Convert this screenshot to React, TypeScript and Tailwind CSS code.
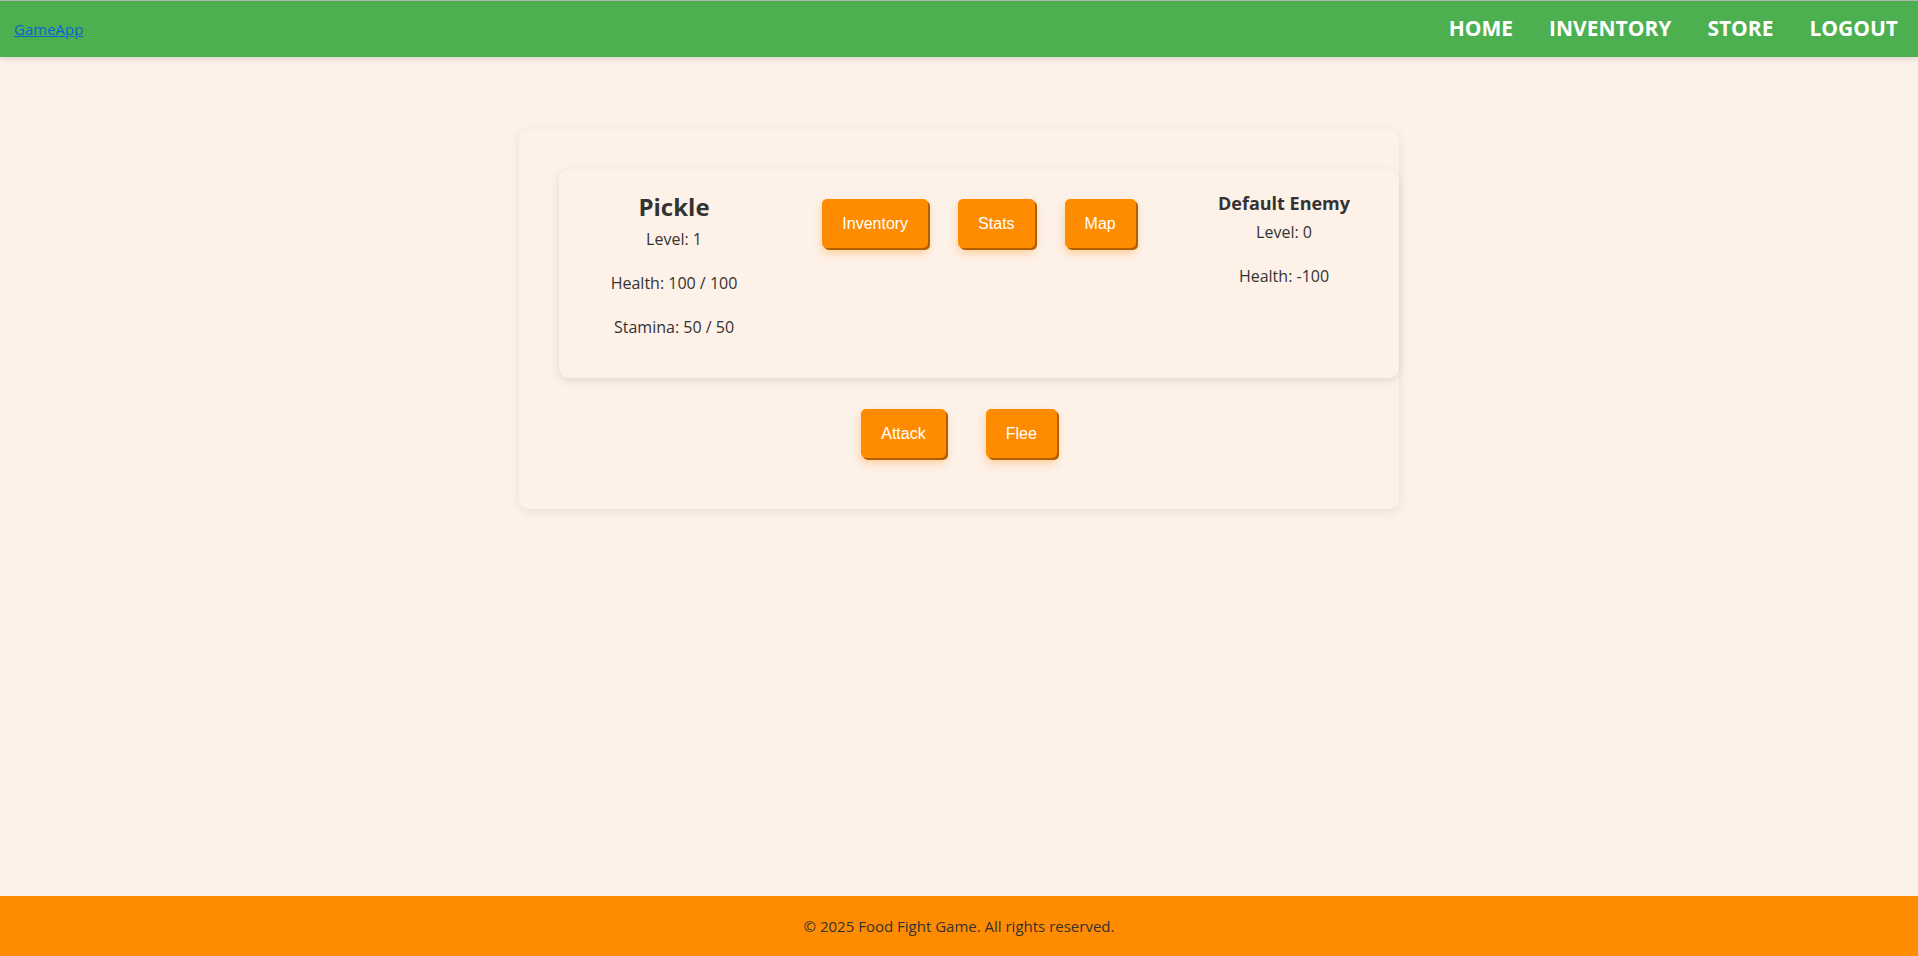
import React from 'react';

const comic = "font-['Comic_Sans_MS','Open_Sans',sans-serif]";

const GameButton: React.FC<{ label: string }> = ({ label }) => (
  <button className="h-[49px] px-[20px] rounded-[5px] bg-[#ff8c00] text-white text-[16px] font-['Tahoma','Liberation_Sans',sans-serif] shadow-[2px_2px_0_#b35f00,0_5px_9px_rgba(255,140,0,0.35)]">
    {label}
  </button>
);

const App: React.FC = () => {
  return (
    <div className={`min-h-screen flex flex-col bg-[#fdf2e9] text-[#333] ${comic}`}>
      <nav className="h-[57px] border-t border-[#b4b4b4] bg-[#4caf50] flex items-center justify-between pl-[14px] pr-[20px] shadow-[0_2px_6px_rgba(0,0,0,0.15)]">
        <a href="#" className="text-[15px] text-[#0b63d6] underline">
          GameApp
        </a>
        <div className="flex items-center gap-[36px] text-white text-[21px] font-bold uppercase">
          <a href="#">Home</a>
          <a href="#">Inventory</a>
          <a href="#">Store</a>
          <a href="#">Logout</a>
        </div>
      </nav>

      <main className="flex-1 flex justify-center pt-[72px]">
        <div className="w-[880px] h-fit pt-[40px] pb-[51px] rounded-[10px] bg-[#fdf1e8] shadow-[0_3px_12px_rgba(0,0,0,0.08)]">
          <div className="ml-[40px] w-[840px] p-[20px] rounded-[10px] bg-[#fdf1e8] shadow-[0_3px_10px_rgba(0,0,0,0.1)] flex items-start justify-between">
            {/* player */}
            <div className="w-[190px] text-center">
              <h2 className="mt-[2px] text-[24px] leading-[32px] font-bold">Pickle</h2>
              <p className="mt-[5px] text-[16px] leading-[22px]">Level: 1</p>
              <p className="mt-[22px] text-[16px] leading-[22px]">Health: 100 / 100</p>
              <p className="mt-[22px] mb-[20px] text-[16px] leading-[22px]">Stamina: 50 / 50</p>
            </div>

            <div className="mt-[10px] flex gap-[30px]">
              <GameButton label="Inventory" />
              <GameButton label="Stats" />
              <GameButton label="Map" />
            </div>

            {/* enemy */}
            <div className="w-[190px] text-center">
              <h3 className="mt-[1px] text-[18px] leading-[26px] font-bold">Default Enemy</h3>
              <p className="mt-[5px] text-[16px] leading-[22px]">Level: 0</p>
              <p className="mt-[22px] text-[16px] leading-[22px]">Health: -100</p>
            </div>
          </div>

          <div className="mt-[31px] flex justify-center gap-[40px]">
            <GameButton label="Attack" />
            <GameButton label="Flee" />
          </div>
        </div>
      </main>

      <footer className="h-[60px] bg-[#ff8c00] flex items-center justify-center text-[15px] text-[#333]">
        © 2025 Food Fight Game. All rights reserved.
      </footer>
    </div>
  );
};

export default App;
